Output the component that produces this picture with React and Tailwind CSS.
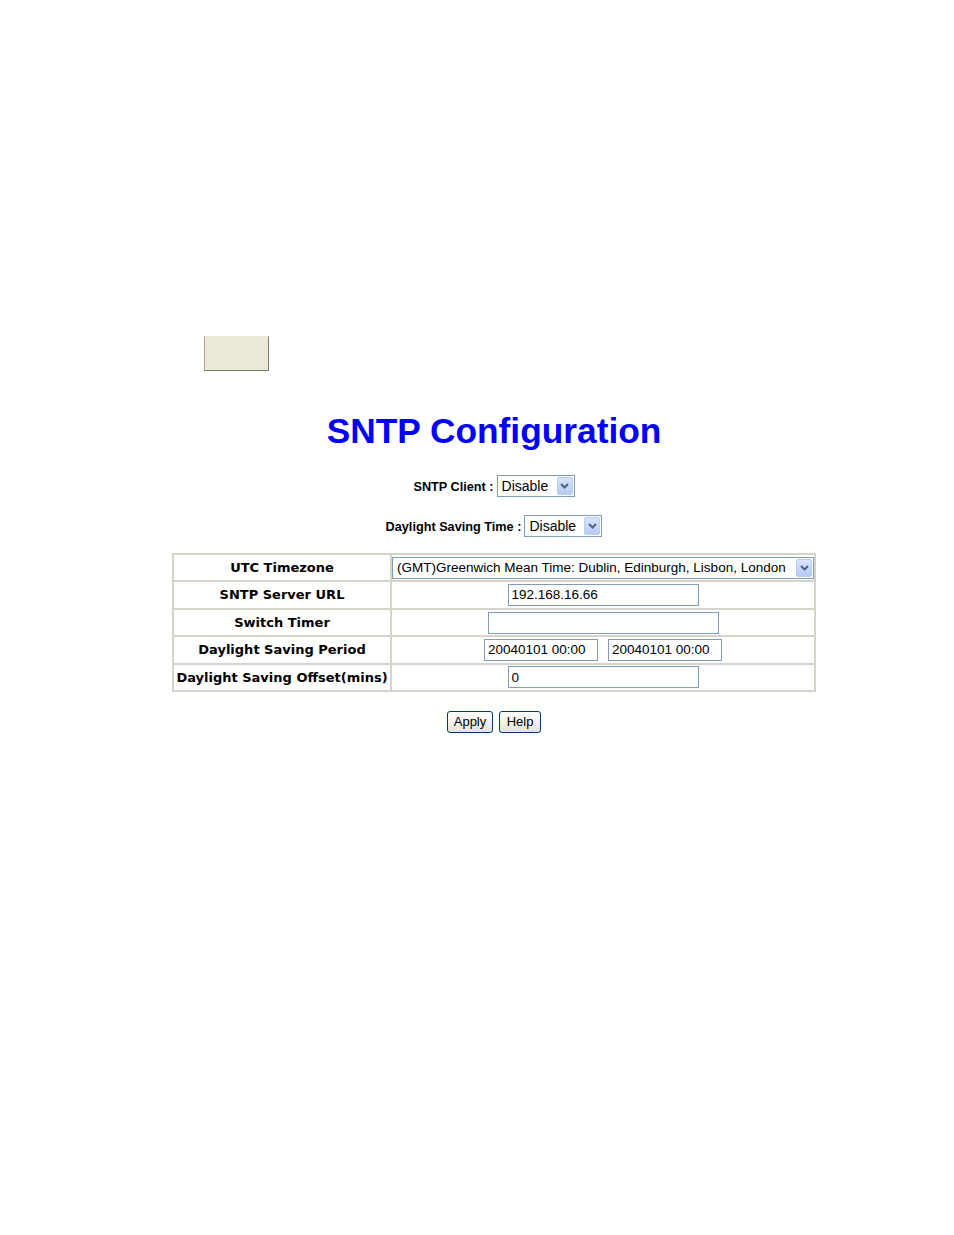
import React from "react";

const arial = { fontFamily: '"Liberation Sans", Arial, sans-serif' };

function Chevron() {
  return (
    <svg width="9" height="6" viewBox="0 0 9 6">
      <path d="M1 1 L4.5 4.5 L8 1" fill="none" stroke="#4d6185" strokeWidth="2" />
    </svg>
  );
}

function FakeSelect({ value, width, size = "text-[13.5px]" }) {
  return (
    <div
      className="flex items-center h-[22px] border border-[#7f9db9] bg-white pl-[4px] pr-[1px]"
      style={{ width }}
    >
      <span className={`flex-1 text-left ${size} text-black leading-[18px] whitespace-nowrap overflow-hidden`}>
        {value}
      </span>
      <div className="w-[16px] h-[18px] rounded-[2px] border border-[#b9cdf3] bg-gradient-to-b from-[#d9e5fd] to-[#b5cbf5] flex items-center justify-center">
        <Chevron />
      </div>
    </div>
  );
}

function TextBox({ value = "", width }) {
  return (
    <div
      className="h-[22px] border border-[#7f9db9] bg-white pl-[3px] flex items-center text-[13.5px] text-black leading-none whitespace-nowrap"
      style={{ width }}
    >
      {value}
    </div>
  );
}

function XpButton({ children, width }) {
  return (
    <div
      className="h-[22px] rounded-[3px] border border-[#003c74] bg-gradient-to-b from-white to-[#e6e3d6] flex items-center justify-center text-[13px] text-black"
      style={{ width }}
    >
      {children}
    </div>
  );
}

const rows = [
  {
    label: "UTC Timezone",
    cell: (
      <div className="flex justify-center">
        <FakeSelect width={422} value="(GMT)Greenwich Mean Time: Dublin, Edinburgh, Lisbon, London" />
      </div>
    ),
  },
  { label: "SNTP Server URL", cell: <div className="flex justify-center"><TextBox width={191} value="192.168.16.66" /></div> },
  { label: "Switch Timer", cell: <div className="flex justify-center"><TextBox width={231} /></div> },
  {
    label: "Daylight Saving Period",
    cell: (
      <div className="flex justify-center gap-[10px]">
        <TextBox width={114} value="20040101 00:00" />
        <TextBox width={114} value="20040101 00:00" />
      </div>
    ),
  },
  { label: "Daylight Saving Offset(mins)", cell: <div className="flex justify-center"><TextBox width={191} value="0" /></div> },
];

export default function App() {
  return (
    <div className="min-h-screen bg-white pt-[336px]" style={arial}>
      {/* empty top button */}
      <div className="ml-[204px] w-[65px] h-[35px] bg-[#ece9d8] border border-l-[#a8a597] border-t-[#e8e6dc] border-r-[#7a7868] border-b-[#7a7868]" />

      <div className="ml-[172px] w-[644px] flex flex-col items-center">
        <h1 className="mt-[40px] h-[40px] leading-[40px] text-[35.3px] font-bold text-[#0000ff]">
          SNTP Configuration
        </h1>

        <div className="mt-[24px] flex items-center gap-[3px]">
          <span className="text-[12.7px] font-bold text-black pt-[3px]">SNTP Client :</span>
          <FakeSelect width={78} value="Disable" size="text-[14px]" />
        </div>

        <div className="mt-[18px] flex items-center gap-[3px]">
          <span className="text-[12.7px] font-bold text-black pt-[3px]">Daylight Saving Time :</span>
          <FakeSelect width={78} value="Disable" size="text-[14px]" />
        </div>

        <table className="mt-[16px] w-[644px] border-collapse border-2 border-[#d6d3ca]">
          <tbody>
            {rows.map((r) => (
              <tr key={r.label} className="h-[27.4px]">
                <td
                  className="w-[218px] border-2 border-[#d6d3ca] p-0 text-center text-[13px] font-bold text-black whitespace-nowrap"
                  style={{ fontFamily: '"DejaVu Sans", Verdana, sans-serif' }}
                >
                  {r.label}
                </td>
                <td className="border-2 border-[#d6d3ca] p-0">{r.cell}</td>
              </tr>
            ))}
          </tbody>
        </table>

        <div className="mt-[19px] flex gap-[6px]">
          <XpButton width={46}>Apply</XpButton>
          <XpButton width={42}>Help</XpButton>
        </div>
      </div>
    </div>
  );
}
